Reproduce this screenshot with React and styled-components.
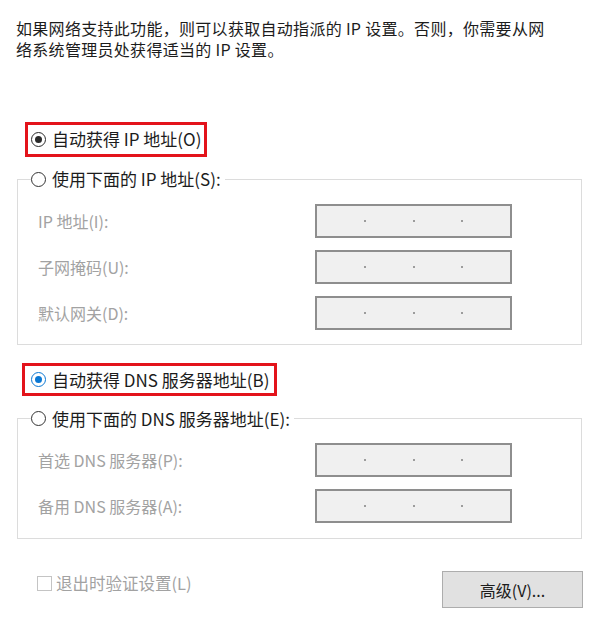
import React from 'react';
import styled, { createGlobalStyle, css } from 'styled-components';

const Global = createGlobalStyle`
  body {
    margin: 0;
    background: #fff;
    font-family: "Noto Sans CJK SC", "Noto Sans", sans-serif;
    color: #1c1c1c;
  }
`;

const Page = styled.div`
  width: 600px;
  height: 629px;
  padding-top: 18px;
  box-sizing: border-box;
  display: flex;
  flex-direction: column;
  align-items: flex-start;
`;

const Intro = styled.p`
  margin: 0 0 0 16px;
  font-size: 16px;
  letter-spacing: 0.3px;
  line-height: 21px;
  white-space: nowrap;
`;

const Highlight = styled.div`
  display: inline-flex;
  border: 3px solid #e3131b;
  margin-top: ${p => p.$top}px;
  margin-left: ${p => p.$left}px;
  padding: ${p => p.$pad};
`;

const Option = styled.label`
  display: inline-flex;
  align-items: center;
  gap: 6px;
  font-size: 17px;
  line-height: 22px;
  white-space: nowrap;
  color: #1c1c1c;
`;

const tones = {
  dark: '#2a2a2a',
  blue: '#0a78d4',
  plain: '#333',
};

const Radio = styled.span`
  width: 13px;
  height: 13px;
  border: 1.5px solid ${p => tones[p.$tone]};
  border-radius: 50%;
  display: grid;
  place-items: center;
  flex: none;
  ${p => p.$checked && css`
    &::after {
      content: '';
      width: 7px;
      height: 7px;
      border-radius: 50%;
      background: ${tones[p.$tone]};
    }
  `}
`;

const Group = styled.fieldset`
  margin: ${p => p.$top}px 16px 0 17px;
  padding: 0;
  width: 565px;
  box-sizing: border-box;
  border: 1px solid #dcdcdc;
`;

const Legend = styled.legend`
  margin-left: 13px;
  padding: 0 4px 0 0;
  line-height: 22px;
`;

const Fields = styled.div`
  display: grid;
  grid-template-columns: 277px 197px;
  row-gap: 12px;
  padding: ${p => p.$pad};
`;

const FieldLabel = styled.span`
  font-size: 16px;
  line-height: 34px;
  color: #a2a2a2;
  white-space: nowrap;
`;

const IpField = styled.div`
  height: 34px;
  box-sizing: border-box;
  border: 2px solid #8e8e8e;
  background: #f0f0f0;
  display: flex;
  align-items: center;
  justify-content: space-evenly;
`;

const Dot = styled.span`
  width: 2px;
  height: 2px;
  background: #808080;
  border-radius: 50%;
`;

const Footer = styled.div`
  align-self: stretch;
  margin-top: 32px;
  padding: 0 17px 0 37px;
  display: flex;
  justify-content: space-between;
  align-items: flex-start;
`;

const CheckOption = styled.label`
  display: inline-flex;
  align-items: center;
  gap: 4px;
  font-size: 16.5px;
  line-height: 24px;
  color: #a2a2a2;
`;

const CheckBox = styled.span`
  width: 13px;
  height: 13px;
  border: 1px solid #c4c4c4;
  background: #fff;
`;

const Button = styled.button`
  width: 141px;
  height: 37px;
  border: 1px solid #adadad;
  background: #e1e1e1;
  font-family: inherit;
  font-size: 16px;
  color: #1c1c1c;
  padding: 0;
`;

const IpBox = () => (
  <IpField>
    <Dot /><Dot /><Dot />
  </IpField>
);

const FieldGroup = ({ top, label, fields, pad }) => (
  <Group $top={top}>
    <Legend>
      <Option>
        <Radio $tone="plain" />
        {label}
      </Option>
    </Legend>
    <Fields $pad={pad}>
      {fields.map(f => (
        <React.Fragment key={f}>
          <FieldLabel>{f}</FieldLabel>
          <IpBox />
        </React.Fragment>
      ))}
    </Fields>
  </Group>
);

export default function App() {
  return (
    <>
      <Global />
      <Page>
        <Intro>
          如果网络支持此功能，则可以获取自动指派的 IP 设置。否则，你需要从网
          <br />
          络系统管理员处获得适当的 IP 设置。
        </Intro>

        <Highlight $top={62} $left={25} $pad="3px 3px 4px 3px">
          <Option>
            <Radio $tone="dark" $checked />
            自动获得 IP 地址(O)
          </Option>
        </Highlight>

        <FieldGroup
          top={11}
          label="使用下面的 IP 地址(S):"
          pad="13px 0 14px 20px"
          fields={['IP 地址(I):', '子网掩码(U):', '默认网关(D):']}
        />

        <Highlight $top={18} $left={22} $pad="3px 5px 2px 6px">
          <Option>
            <Radio $tone="blue" $checked />
            自动获得 DNS 服务器地址(B)
          </Option>
        </Highlight>

        <FieldGroup
          top={12}
          label="使用下面的 DNS 服务器地址(E):"
          pad="13px 0 15px 20px"
          fields={['首选 DNS 服务器(P):', '备用 DNS 服务器(A):']}
        />

        <Footer>
          <CheckOption>
            <CheckBox />
            退出时验证设置(L)
          </CheckOption>
          <Button>高级(V)...</Button>
        </Footer>
      </Page>
    </>
  );
}
